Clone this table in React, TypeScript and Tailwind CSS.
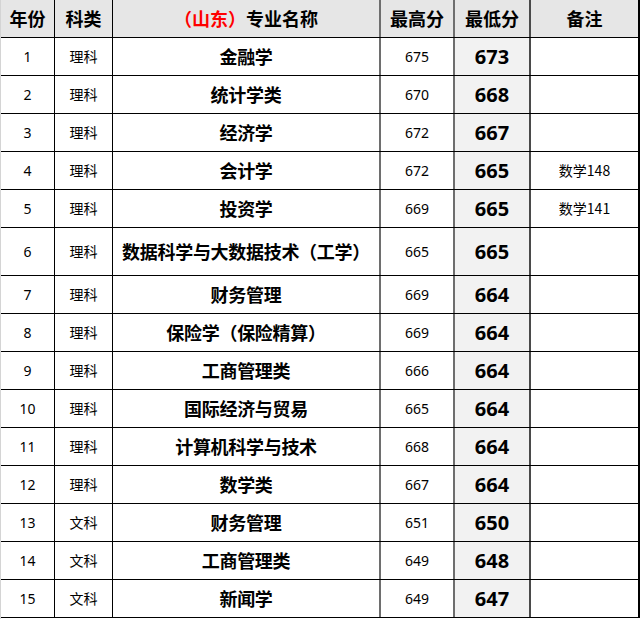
import React from 'react'

type Row = { n: number; type: string; name: string; max: number; min: number; note?: string; tall?: boolean }

const rows: Row[] = [
  { n: 1, type: '理科', name: '金融学', max: 675, min: 673 },
  { n: 2, type: '理科', name: '统计学类', max: 670, min: 668 },
  { n: 3, type: '理科', name: '经济学', max: 672, min: 667 },
  { n: 4, type: '理科', name: '会计学', max: 672, min: 665, note: '数学148' },
  { n: 5, type: '理科', name: '投资学', max: 669, min: 665, note: '数学141' },
  { n: 6, type: '理科', name: '数据科学与大数据技术（工学）', max: 665, min: 665, tall: true },
  { n: 7, type: '理科', name: '财务管理', max: 669, min: 664 },
  { n: 8, type: '理科', name: '保险学（保险精算）', max: 669, min: 664 },
  { n: 9, type: '理科', name: '工商管理类', max: 666, min: 664 },
  { n: 10, type: '理科', name: '国际经济与贸易', max: 665, min: 664 },
  { n: 11, type: '理科', name: '计算机科学与技术', max: 668, min: 664 },
  { n: 12, type: '理科', name: '数学类', max: 667, min: 664 },
  { n: 13, type: '文科', name: '财务管理', max: 651, min: 650 },
  { n: 14, type: '文科', name: '工商管理类', max: 649, min: 648 },
  { n: 15, type: '文科', name: '新闻学', max: 649, min: 647 },
]

const cjk = "font-['Noto_Sans_CJK_SC','Noto_Sans',sans-serif]"
const num = "font-['Noto_Sans','Noto_Sans_CJK_SC',sans-serif]"

const c1 = 'w-[54px] shrink-0 border-r border-black'
const c2 = 'w-[58px] shrink-0 border-r border-black'
const c3 = 'w-[268px] shrink-0 border-r-2 border-[#6e6e6e]'
const c4 = 'w-[74px] shrink-0 border-r-2 border-[#6e6e6e]'
const c5 = 'w-[76px] shrink-0 border-r-2 border-[#4a4a4a]'
const c6 = 'flex-1 border-r-2 border-black'

const cell = 'flex items-center justify-center'

export default function App() {
  return (
    <div className={`w-[640px] h-[619px] bg-white text-black ${cjk} border-l border-[#d4d4d4]`}>
      {/* Header */}
      <div className="flex h-[38px] bg-[#e6e6e6] border-b border-black text-[18px] font-bold">
        <div className={`${c1} ${cell} border-[#333]`}>年份</div>
        <div className={`${c2} ${cell}`}>科类</div>
        <div className={`${c3} ${cell}`}>
          <span className="text-[#ff0000]">（山东）</span>专业名称
        </div>
        <div className={`${c4} ${cell}`}>最高分</div>
        <div className={`${c5} ${cell}`}>最低分</div>
        <div className={`${c6} ${cell}`}>备注</div>
      </div>

      {rows.map((r) => (
        <div key={r.n} className={`flex border-b border-black ${r.tall ? 'h-[48px]' : 'h-[38px]'}`}>
          <div className={`${c1} ${cell} ${num} text-[14px]`}>{r.n}</div>
          <div className={`${c2} ${cell} text-[14px]`}>{r.type}</div>
          <div className={`${c3} ${cell} text-[18px] font-bold tracking-[-0.3px]`}>{r.name}</div>
          <div className={`${c4} ${cell} ${num} text-[14px]`}>{r.max}</div>
          <div className={`${c5} ${cell} ${num} bg-[#f2f2f2] text-[20px] font-bold`}>{r.min}</div>
          <div className={`${c6} ${cell} text-[14px]`}>{r.note}</div>
        </div>
      ))}
    </div>
  )
}
